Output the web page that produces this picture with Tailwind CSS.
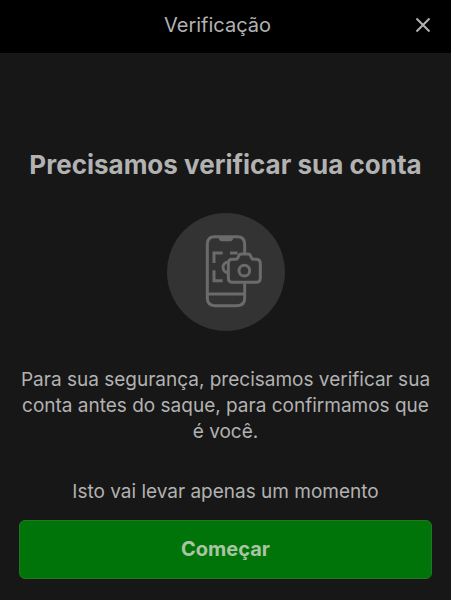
<!DOCTYPE html>
<html lang="pt-BR">
<head>
<meta charset="utf-8">
<meta name="viewport" content="width=device-width, initial-scale=1">
<title>Verificação</title>
<script src="https://cdn.jsdelivr.net/npm/@tailwindcss/browser@4"></script>
</head>
<body class="flex min-h-screen flex-col bg-[#171717] font-['Inter',sans-serif] text-[#b2b2b2]">
<header class="flex items-center bg-black px-5 pt-[9px] pb-3">
  <h1 class="grow text-center text-xl leading-8">Verificação</h1>
  <button type="button" aria-label="Fechar">
    <svg class="size-4" viewBox="0 0 16 16" fill="none" stroke="currentColor" stroke-width="2" aria-hidden="true"><path d="M1.5 1.5 14.5 14.5M14.5 1.5 1.5 14.5"/></svg>
  </button>
</header>
<main class="flex grow flex-col px-[19px] pt-24 pb-[21px] text-center">
  <h2 class="text-[26px] leading-8 font-bold">Precisamos verificar sua conta</h2>
  <svg class="mx-auto mt-8 size-[118px]" viewBox="20 26 354 354" fill="none" stroke="#6b6b6b" stroke-width="9" aria-hidden="true">
    <circle cx="197" cy="203" r="177" fill="#333333" stroke="none"/>
    <path stroke-linecap="round" d="M253 144V119Q253 97 231 97H163Q141 97 141 119V281Q141 304 164 304H230Q253 304 253 281V239M141 269H253"/>
    <path d="M173 97H221L217 106Q215 111 209 111H185Q179 111 177 106Z" fill="#6b6b6b" stroke="none"/>
    <path d="M161 176V146H187M161 198V229H187M209 146H232"/>
    <path d="M204 173A16 16 0 0 0 204 205"/>
    <path stroke-linejoin="round" d="M216 165H226Q231 165 233 160L235 155Q237 149 243 149H263Q269 149 271 155L273 160Q275 165 280 165H287Q300 165 300 178V221Q300 234 287 234H217Q204 234 204 221V178Q204 165 216 165Z" fill="#333333"/>
    <circle cx="252" cy="199" r="16"/>
  </svg>
  <p class="mt-9 text-[19px] leading-[26px]">Para sua segurança, precisamos verificar sua conta antes do saque, para confirmamos que é você.</p>
  <p class="mt-auto text-[19px] leading-[26px]">Isto vai levar apenas um momento</p>
  <button type="button" class="mt-[15px] rounded-md border border-[#1f781f] bg-[#007408] py-4 text-xl leading-[25px] font-bold text-[#a9c5a3]">Começar</button>
</main>
</body>
</html>
